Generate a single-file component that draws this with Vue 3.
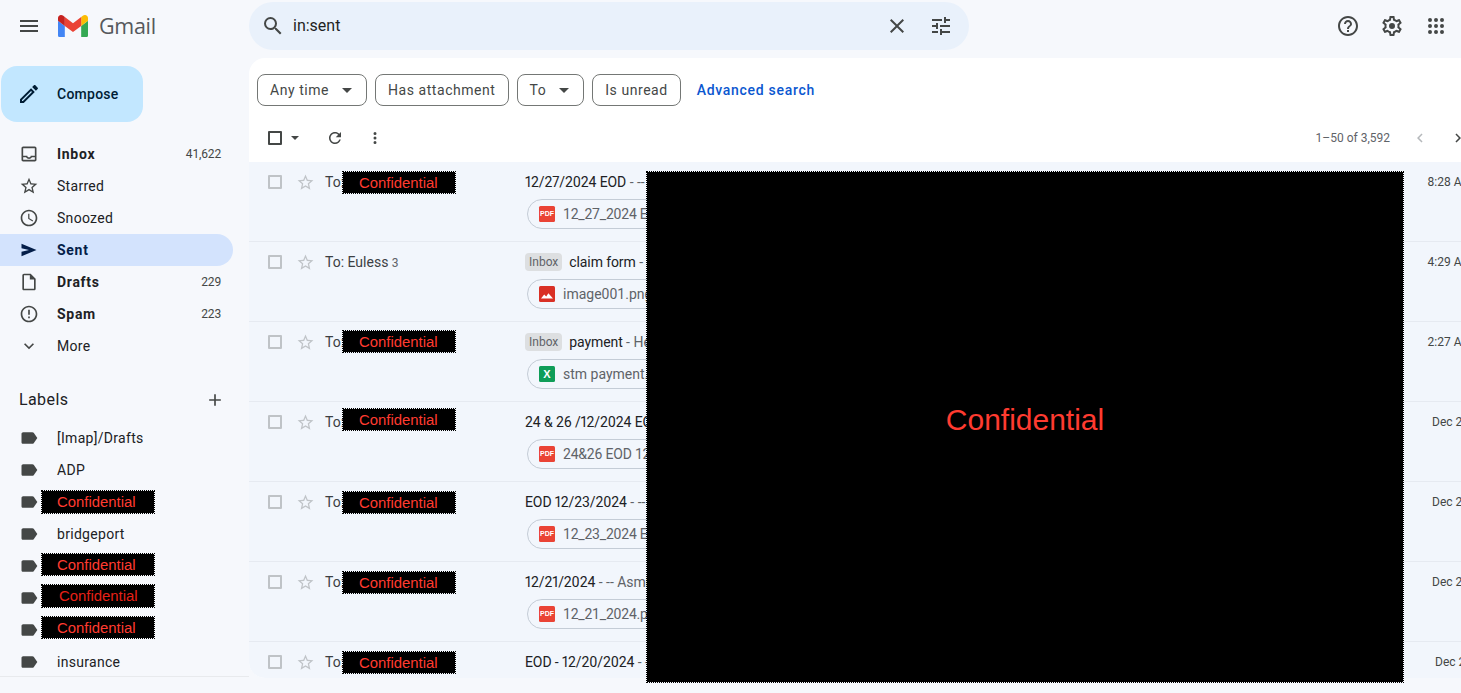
<script setup>
const I = {
  menu: 'M3 18h18v-2H3v2zm0-5h18v-2H3v2zm0-7v2h18V6H3z',
  search: 'M15.5 14h-.79l-.28-.27A6.471 6.471 0 0 0 16 9.5 6.5 6.5 0 1 0 9.5 16c1.61 0 3.09-.59 4.23-1.57l.27.28v.79l5 4.99L20.49 19l-4.99-5zm-6 0C7.01 14 5 11.99 5 9.5S7.01 5 9.5 5 14 7.01 14 9.5 11.99 14 9.5 14z',
  close: 'M19 6.41L17.59 5 12 10.59 6.41 5 5 6.41 10.59 12 5 17.59 6.41 19 12 13.41 17.59 19 19 17.59 13.41 12z',
  tune: 'M3 17v2h6v-2H3zM3 5v2h10V5H3zm10 16v-2h8v-2h-8v-2h-2v6h2zM7 9v2H3v2h4v2h2V9H7zm14 4v-2H11v2h10zm-6-4h2V7h4V5h-4V3h-2v6z',
  help: 'M11 18h2v-2h-2v2zm1-16C6.48 2 2 6.48 2 12s4.48 10 10 10 10-4.48 10-10S17.52 2 12 2zm0 18c-4.41 0-8-3.59-8-8s3.59-8 8-8 8 3.59 8 8-3.59 8-8 8zm0-14c-2.21 0-4 1.79-4 4h2c0-1.1.9-2 2-2s2 .9 2 2c0 2-3 1.75-3 5h2c0-2.25 3-2.5 3-5 0-2.21-1.79-4-4-4z',
  gear: 'M19.43 12.98c.04-.32.07-.64.07-.98 0-.34-.03-.66-.07-.98l2.11-1.65c.19-.15.24-.42.12-.64l-2-3.46c-.09-.16-.26-.25-.44-.25-.06 0-.12.01-.17.03l-2.49 1c-.52-.4-1.08-.73-1.69-.98l-.38-2.65C14.46 2.18 14.25 2 14 2h-4c-.25 0-.46.18-.49.42l-.38 2.65c-.61.25-1.17.59-1.69.98l-2.49-1c-.06-.02-.12-.03-.18-.03-.17 0-.34.09-.43.25l-2 3.46c-.13.22-.07.49.12.64l2.11 1.65c-.04.32-.07.65-.07.98 0 .33.03.66.07.98l-2.11 1.65c-.19.15-.24.42-.12.64l2 3.46c.09.16.26.25.44.25.06 0 .12-.01.17-.03l2.49-1c.52.4 1.08.73 1.69.98l.38 2.65c.03.24.24.42.49.42h4c.25 0 .46-.18.49-.42l.38-2.65c.61-.25 1.17-.59 1.69-.98l2.49 1c.06.02.12.03.18.03.17 0 .34-.09.43-.25l2-3.46c.12-.22.07-.49-.12-.64l-2.11-1.65zm-1.98-1.71c.04.31.05.52.05.73 0 .21-.02.43-.05.73l-.14 1.13.89.7 1.08.84-.7 1.21-1.27-.51-1.04-.42-.9.68c-.43.32-.84.56-1.25.73l-1.06.43-.16 1.13-.2 1.35h-1.4l-.19-1.35-.16-1.13-1.06-.43c-.43-.18-.83-.41-1.23-.71l-.91-.7-1.06.43-1.27.51-.7-1.21 1.08-.84.89-.7-.14-1.13c-.03-.31-.05-.54-.05-.74s.02-.43.05-.73l.14-1.13-.89-.7-1.08-.84.7-1.21 1.27.51 1.04.42.9-.68c.43-.32.84-.56 1.25-.73l1.06-.43.16-1.13.2-1.35h1.39l.19 1.35.16 1.13 1.06.43c.43.18.83.41 1.23.71l.91.7 1.06-.43 1.27-.51.7 1.21-1.07.85-.89.7.14 1.13zM12 9a3 3 0 1 0 0 6 3 3 0 0 0 0-6z',
  apps: 'M6 8a2 2 0 1 0 0-4 2 2 0 0 0 0 4zm6 0a2 2 0 1 0 0-4 2 2 0 0 0 0 4zm6 0a2 2 0 1 0 0-4 2 2 0 0 0 0 4zM6 14a2 2 0 1 0 0-4 2 2 0 0 0 0 4zm6 0a2 2 0 1 0 0-4 2 2 0 0 0 0 4zm6 0a2 2 0 1 0 0-4 2 2 0 0 0 0 4zM6 20a2 2 0 1 0 0-4 2 2 0 0 0 0 4zm6 0a2 2 0 1 0 0-4 2 2 0 0 0 0 4zm6 0a2 2 0 1 0 0-4 2 2 0 0 0 0 4z',
  edit: 'M14.06 9.02l.92.92L5.92 19H5v-.92l9.06-9.06M17.66 3c-.25 0-.51.1-.7.29l-1.83 1.83 3.75 3.75 1.83-1.83c.39-.39.39-1.02 0-1.41l-2.34-2.34c-.2-.2-.45-.29-.71-.29zm-3.6 3.19L3 17.25V21h3.75L17.81 9.94l-3.75-3.75z',
  inbox: 'M19 3H5c-1.1 0-2 .9-2 2v14c0 1.1.9 2 2 2h14c1.1 0 2-.9 2-2V5c0-1.1-.9-2-2-2zm0 16H5v-3h3.56c.69 1.19 1.97 2 3.45 2s2.75-.81 3.45-2H19v3zm0-5h-4.99c0 1.1-.9 2-2 2s-2-.9-2-2H5V5h14v9z',
  star: 'M22 9.24l-7.19-.62L12 2 9.19 8.63 2 9.24l5.46 4.73L5.82 21 12 17.27 18.18 21l-1.63-7.03L22 9.24zM12 15.4l-3.76 2.27 1-4.28-3.32-2.88 4.38-.38L12 6.1l1.71 4.04 4.38.38-3.32 2.88 1 4.28L12 15.4z',
  clock: 'M11.99 2C6.47 2 2 6.48 2 12s4.47 10 9.99 10C17.52 22 22 17.52 22 12S17.52 2 11.99 2zM12 20c-4.42 0-8-3.58-8-8s3.58-8 8-8 8 3.58 8 8-3.58 8-8 8zm.5-13H11v6l5.25 3.15.75-1.23-4.5-2.67z',
  send: 'M3 19.5V14l9-2-9-2V4.5L21 12z',
  draft: 'M14 2H6c-1.1 0-1.99.9-1.99 2L4 20c0 1.1.89 2 1.99 2H18c1.1 0 2-.9 2-2V8l-6-6zM6 20V4h7v5h5v11H6z',
  spam: 'M11 15h2v2h-2zm0-8h2v6h-2zm.99-5C6.47 2 2 6.48 2 12s4.47 10 9.99 10C17.52 22 22 17.52 22 12S17.52 2 11.99 2zM12 20c-4.42 0-8-3.58-8-8s3.58-8 8-8 8 3.58 8 8-3.58 8-8 8z',
  more: 'M16.59 8.59L12 13.17 7.41 8.59 6 10l6 6 6-6z',
  label: 'M17.63 5.84C17.27 5.33 16.67 5 16 5L5 5.01C3.9 5.01 3 5.9 3 7v10c0 1.1.9 1.99 2 1.99L16 19c.67 0 1.27-.33 1.63-.84L22 12l-4.37-6.16z',
  plus: 'M19 13h-6v6h-2v-6H5v-2h6V5h2v6h6v2z',
  refresh: 'M17.65 6.35C16.2 4.9 14.21 4 12 4c-4.42 0-7.99 3.58-7.99 8s3.57 8 7.99 8c3.73 0 6.84-2.55 7.73-6h-2.08c-.82 2.33-3.04 4-5.65 4-3.31 0-6-2.69-6-6s2.69-6 6-6c1.66 0 3.14.69 4.22 1.78L13 11h7V4l-2.35 2.35z',
  vert: 'M12 8a2 2 0 1 0 0-4 2 2 0 0 0 0 4zm0 2a2 2 0 1 0 0 4 2 2 0 0 0 0-4zm0 6a2 2 0 1 0 0 4 2 2 0 0 0 0-4z',
  left: 'M15.41 7.41L14 6l-6 6 6 6 1.41-1.41L10.83 12z',
  right: 'M10 6L8.59 7.41 13.17 12l-4.58 4.59L10 18l6-6z'
}

const nav = [
  { name: 'Inbox', icon: 'inbox', count: '41,622', bold: true },
  { name: 'Starred', icon: 'star' },
  { name: 'Snoozed', icon: 'clock' },
  { name: 'Sent', icon: 'send', bold: true, active: true },
  { name: 'Drafts', icon: 'draft', count: '229', bold: true },
  { name: 'Spam', icon: 'spam', count: '223', bold: true },
  { name: 'More', icon: 'more' }
]

const labels = [
  { name: '[Imap]/Drafts' },
  { name: 'ADP' },
  { mask: { top: 5, height: 22, text: 0 } },
  { name: 'bridgeport' },
  { mask: { top: 4, height: 21, text: 0 } },
  { mask: { top: 3, height: 22, text: 2, dark: true } },
  { mask: { top: 3, height: 21, text: 0 } },
  { name: 'insurance' }
]

const rows = [
  { mask: 0, subject: '12/27/2024 EOD', rest: ' - -- Asm', file: '12_27_2024 EOD.pdf', type: 'pdf', time: '8:28 AM' },
  { to: 'To: Euless', n: '3', tag: true, subject: 'claim form', rest: ' - -- Hello', file: 'image001.png', type: 'img', time: '4:29 AM' },
  { mask: -1, tag: true, subject: 'payment', rest: ' - Hello', file: 'stm payment.xlsx', type: 'xls', time: '2:27 AM' },
  { mask: -3, subject: '24 & 26 /12/2024 EOD', rest: ' - --', file: '24&26 EOD 12.pdf', type: 'pdf', time: 'Dec 26', wide: true },
  { mask: 0, subject: 'EOD 12/23/2024', rest: ' - -- Asm', file: '12_23_2024 EOD.pdf', type: 'pdf', time: 'Dec 23', wide: true },
  { mask: 0, subject: '12/21/2024', rest: ' - -- Asmita', file: '12_21_2024.pdf', type: 'pdf', time: 'Dec 21', wide: true },
  { mask: 0, subject: 'EOD - 12/20/2024', rest: ' - --', file: '12_20_2024.pdf', type: 'pdf', time: 'Dec 20' }
]
</script>

<template>
  <div class="app">
    <aside class="side">
      <div class="brand">
        <svg class="ic menu" viewBox="0 0 24 24"><path :d="I.menu" /></svg>
        <svg class="logo" viewBox="52 42 88 66">
          <path fill="#4285f4" d="M58 108h14V74L52 59v43c0 3.32 2.69 6 6 6" />
          <path fill="#34a853" d="M120 108h14c3.32 0 6-2.69 6-6V59l-20 15" />
          <path fill="#fbbc04" d="M120 48v26l20-15v-8c0-7.42-8.47-11.65-14.4-7.2" />
          <path fill="#ea4335" d="M72 74V48l24 18 24-18v26L96 92" />
          <path fill="#c5221f" d="M52 51v8l20 15V48l-5.6-4.2c-5.94-4.45-14.4-.22-14.4 7.2" />
        </svg>
        <span class="wordmark">Gmail</span>
      </div>

      <button class="compose">
        <svg class="ic pencil" viewBox="0 0 24 24"><path :d="I.edit" /></svg>
        <span>Compose</span>
      </button>

      <nav class="nav">
        <div v-for="n in nav" :key="n.name" class="nav-row" :class="{ active: n.active, bold: n.bold }">
          <svg class="ic nav-ic" viewBox="0 0 24 24"><path :d="I[n.icon]" /></svg>
          <span class="nav-name">{{ n.name }}</span>
          <span v-if="n.count" class="count">{{ n.count }}</span>
        </div>
      </nav>

      <div class="labels-head">
        <span>Labels</span>
        <svg class="ic plus" viewBox="0 0 24 24"><path :d="I.plus" /></svg>
      </div>

      <div class="labels">
        <div v-for="(l, i) in labels" :key="i" class="label-row">
          <svg class="ic nav-ic" viewBox="0 0 24 24"><path :d="I.label" /></svg>
          <span v-if="l.name" class="label-name">{{ l.name }}</span>
          <span
            v-else
            class="mask label-mask"
            :class="{ dark: l.mask.dark }"
            :style="{ top: l.mask.top + 'px', height: l.mask.height + 'px', paddingLeft: 15 + l.mask.text + 'px' }"
          >Confidential</span>
        </div>
      </div>
    </aside>

    <div class="right">
      <header class="top">
        <div class="searchbar">
          <svg class="ic search" viewBox="0 0 24 24"><path :d="I.search" /></svg>
          <span class="query">in:sent</span>
          <svg class="ic x" viewBox="0 0 24 24"><path :d="I.close" /></svg>
          <svg class="ic tune" viewBox="0 0 24 24"><path :d="I.tune" /></svg>
        </div>
        <div class="top-actions">
          <svg class="ic" viewBox="0 0 24 24"><path :d="I.help" /></svg>
          <svg class="ic" viewBox="0 0 24 24"><path :d="I.gear" /></svg>
          <svg class="ic" viewBox="0 0 24 24"><path :d="I.apps" /></svg>
        </div>
      </header>

      <main class="panel">
        <div class="filters">
          <button class="chip">Any time<i class="caret" /></button>
          <button class="chip">Has attachment</button>
          <button class="chip">To<i class="caret" /></button>
          <button class="chip">Is unread</button>
          <a class="adv">Advanced search</a>
        </div>

        <div class="toolbar">
          <span class="box dark-box" />
          <i class="mini-caret" />
          <svg class="ic tool refresh" viewBox="0 0 24 24"><path :d="I.refresh" /></svg>
          <svg class="ic tool vert" viewBox="0 0 24 24"><path :d="I.vert" /></svg>
          <span class="pager">1–50 of 3,592</span>
          <svg class="ic chev dim" viewBox="0 0 24 24"><path :d="I.left" /></svg>
          <svg class="ic chev" viewBox="0 0 24 24"><path :d="I.right" /></svg>
        </div>

        <div class="list">
          <div v-for="(r, i) in rows" :key="i" class="row">
            <span class="box" />
            <svg class="ic rstar" viewBox="0 0 24 24"><path :d="I.star" /></svg>
            <div class="who">
              <template v-if="r.to">{{ r.to }} <small>{{ r.n }}</small></template>
              <template v-else>To:</template>
              <span v-if="r.to === undefined" class="mask who-mask" :style="{ top: r.mask + 'px' }">Confidential</span>
            </div>
            <div class="body">
              <div class="line">
                <span v-if="r.tag" class="tag">Inbox</span>
                <span class="subj">{{ r.subject }}</span><span class="rest">{{ r.rest }}</span>
              </div>
              <div class="attach" :class="r.type">
                <span v-if="r.type === 'pdf'" class="ft f-pdf">PDF</span>
                <span v-else-if="r.type === 'xls'" class="ft f-xls">X</span>
                <span v-else class="ft f-img">
                  <svg viewBox="0 0 16 16"><path fill="#fff" d="M2 12.5 5.2 8.6l2 2 2.2-3.4 4.6 5.3z" /></svg>
                </span>
                <span class="fname">{{ r.file }}</span>
              </div>
            </div>
            <span class="time" :class="{ wide: r.wide }">{{ r.time }}</span>
          </div>
        </div>
      </main>
    </div>

    <div class="big-mask">Confidential</div>
  </div>
</template>

<style>
html, body { margin: 0; height: 100%; overflow: hidden; background: #f6f8fc; }
</style>

<style scoped>
.app {
  position: relative;
  display: flex;
  width: 1461px;
  height: 693px;
  overflow: hidden;
  background: #f6f8fc;
  color: #202124;
  font: 14px/20px Roboto, Arial, sans-serif;
}
.ic { display: block; width: 24px; height: 24px; fill: #444746; flex: none; }

.side { width: 249px; height: 677px; flex: none; overflow: hidden; border-bottom: 1px solid #e8eaed; box-sizing: border-box; }
.brand { display: flex; align-items: center; height: 52px; padding-left: 17px; }
.logo { width: 30px; height: 22.5px; margin-left: 17px; }
.wordmark { margin-left: 11px; font: 21.5px/24px "Open Sans", Roboto, sans-serif; color: #55585c; letter-spacing: -.3px; }

.compose {
  display: flex;
  align-items: center;
  box-sizing: border-box;
  width: 142px;
  height: 56px;
  margin: 14px 0 0 1px;
  padding: 0 0 0 16px;
  border: 0;
  border-radius: 16px;
  background: #c2e7ff;
  color: #001d35;
  font: 500 14px/20px Roboto, Arial, sans-serif;
  letter-spacing: .25px;
}
.pencil { fill: #001d35; margin-right: 16px; }

.nav { margin-top: 16px; }
.nav-row, .label-row {
  position: relative;
  display: flex;
  align-items: center;
  height: 32px;
  padding-left: 19px;
  padding-right: 28px;
  box-sizing: border-box;
  width: 249px;
  color: #202124;
}
.nav-ic { width: 20px; height: 20px; margin-right: 18px; }
.nav-name { flex: 1; letter-spacing: .3px; }
.label-name { letter-spacing: .3px; }
.nav-row.bold .nav-name { font-weight: 700; letter-spacing: .7px; }
.count { font-size: 12px; color: #444746; letter-spacing: -.15px; }
.nav-row.active { width: 233px; padding-right: 12px; border-radius: 0 16px 16px 0; background: #d3e3fd; color: #041e49; }
.nav-row.active .nav-ic { fill: #041e49; }

.labels-head { display: flex; align-items: center; justify-content: space-between; height: 24px; margin-top: 26px; padding: 0 24px 0 19px; font-size: 16px; letter-spacing: .4px; color: #202124; }
.plus { width: 20px; height: 20px; }

.labels { margin-top: 10px; }

.mask {
  position: absolute;
  box-sizing: border-box;
  display: flex;
  align-items: center;
  background: #000;
  outline: 1px dotted #000;
  color: #ff3b30;
  font: 14.9px/20px "Liberation Sans", Arial, sans-serif;
  white-space: nowrap;
}
.label-mask { left: 42px; width: 112px; }
.label-mask.dark { color: #e62117; }
.who-mask { left: 18px; width: 112px; height: 21px; padding-left: 16px; }

.right { flex: 1; min-width: 0; }
.top { display: flex; align-items: center; height: 58px; box-sizing: border-box; padding: 2px 0 8px; }
.searchbar {
  display: flex;
  align-items: center;
  box-sizing: border-box;
  width: 720px;
  height: 48px;
  padding: 0 16px 0 12px;
  border-radius: 24px;
  background: #e9f1fb;
}
.query { flex: 1; margin-left: 8px; font-size: 16px; color: #1f1f1f; }
.x { margin-right: 20px; }
.top-actions { display: flex; gap: 20px; margin-left: 367px; }

.panel {
  position: relative;
  height: 620px;
  overflow: hidden;
  border-radius: 16px 0 0 16px;
  background: #fff;
}
.filters { display: flex; align-items: center; gap: 8px; height: 32px; padding: 16px 0 0 8px; }
.chip {
  display: flex;
  align-items: center;
  box-sizing: border-box;
  height: 32px;
  padding: 0 12px;
  border: 1px solid #747775;
  border-radius: 8px;
  background: #fff;
  color: #444746;
  font: 14px/20px Roboto, Arial, sans-serif;
  letter-spacing: .55px;
}
.caret { width: 0; height: 0; margin-left: 13px; margin-right: 2px; border: 5px solid transparent; border-top-color: #444746; border-bottom: 0; }
.adv { margin-left: 8px; color: #0b57d0; font-weight: 500; letter-spacing: .7px; }

.toolbar { display: flex; align-items: center; height: 48px; margin-top: 8px; padding-left: 19px; width: 1218px; box-sizing: border-box; }
.box { display: block; box-sizing: border-box; flex: none; width: 14px; height: 14px; border: 2px solid #bfc3c7; border-radius: 1px; }
.dark-box { border-color: #444746; }
.mini-caret { width: 0; height: 0; margin-left: 9px; border: 4px solid transparent; border-top-color: #444746; border-bottom: 0; }
.tool { width: 18px; height: 18px; }
.refresh { margin-left: 27px; }
.vert { margin-left: 22px; }
.pager { margin-left: auto; margin-right: 21px; font-size: 12px; color: #5f6368; }
.chev { width: 18px; height: 18px; }
.chev.dim { fill: #b5b8bb; margin-right: 20px; }

.list { width: 1223px; }
.row {
  position: relative;
  display: flex;
  box-sizing: border-box;
  height: 80px;
  padding: 13px 0 0 19px;
  border-bottom: 1px solid #e6eaf1;
  background: #f2f6fc;
}
.rstar { width: 19px; height: 19px; margin: -2px 0 0 14px; fill: #c0c4c8; }
.who { position: relative; width: 200px; margin-left: 10px; color: #3c4043; margin-top: -3px; }
.who small { font-size: 12px; color: #5f6368; }
.body { width: 500px; margin-top: -3px; }
.line { display: flex; align-items: center; height: 20px; white-space: nowrap; }
.tag { padding: 0 4px; height: 18px; margin-right: 7px; border-radius: 4px; background: #dddfe1; color: #5f6368; font-size: 12px; line-height: 18px; }
.subj { color: #202124; letter-spacing: -.1px; font-variant-numeric: proportional-nums; }
.rest { color: #5f6368; white-space: pre; }
.attach {
  display: flex;
  align-items: center;
  box-sizing: border-box;
  width: 210px;
  height: 30px;
  margin: 7px 0 0 2px;
  padding-left: 11px;
  border: 1px solid #c4ccd6;
  border-radius: 15px;
  color: #5f6368;
}
.ft { display: flex; align-items: center; justify-content: center; width: 16px; height: 16px; border-radius: 1.5px; color: #fff; font-family: "Liberation Sans", sans-serif; font-weight: 700; }
.ft svg { width: 16px; height: 16px; display: block; }
.f-pdf { background: #ea4335; font-size: 7px; line-height: 16px; }
.f-xls { background: #0f9d58; font-size: 11px; line-height: 16px; }
.f-img { background: #d93025; }
.fname { margin-left: 8px; white-space: nowrap; }
.attach.pdf .fname { letter-spacing: -.2px; }
.time { position: absolute; right: 0; top: 10px; font-size: 12px; color: #444746; white-space: nowrap; }
.time.wide { right: 3px; }

.big-mask {
  position: absolute;
  left: 647px;
  top: 172px;
  display: flex;
  align-items: center;
  justify-content: center;
  box-sizing: border-box;
  width: 756px;
  height: 510px;
  padding-bottom: 14px;
  background: #000;
  outline: 1px dotted #000;
  color: #ff3b30;
  font: 30px/36px "Liberation Sans", Arial, sans-serif;
}
</style>
